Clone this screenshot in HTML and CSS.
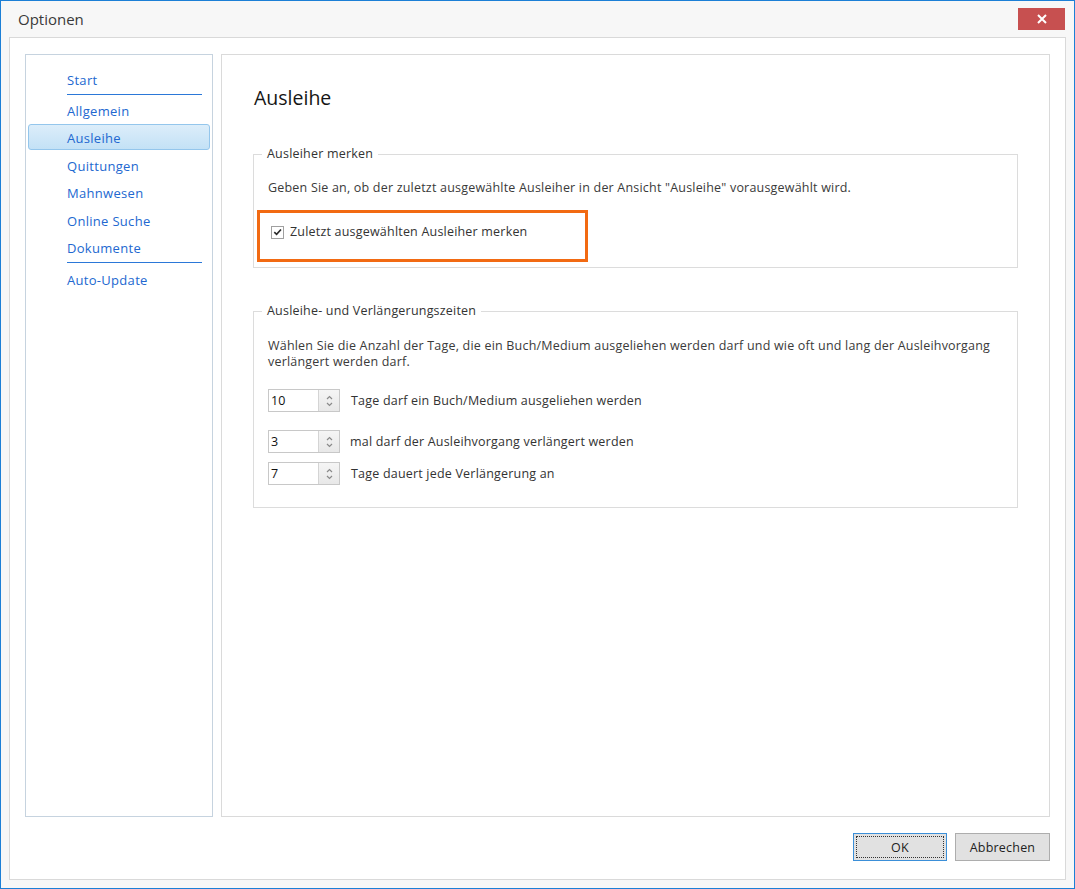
FILE: index.html
```html
<!DOCTYPE html>
<html lang="de">
<head>
    <meta charset="UTF-8">
    <title>Optionen</title>
    <link rel="stylesheet" href="styles.css">
</head>
<body>
    <div class="window">
        <div class="titlebar">
            <span class="title">Optionen</span>
            <button class="close-btn" aria-label="Schließen">
                <svg width="10" height="10" viewBox="0 0 10 10">
                    <path d="M1 1 L9 9 M9 1 L1 9" stroke="#fff" stroke-width="2" fill="none"/>
                </svg>
            </button>
        </div>

        <div class="frame">
            <div class="main">
                <nav class="nav">
                    <div class="nav-item">Start</div>
                    <div class="nav-sep"></div>
                    <div class="nav-item">Allgemein</div>
                    <div class="nav-item selected">Ausleihe</div>
                    <div class="nav-item">Quittungen</div>
                    <div class="nav-item">Mahnwesen</div>
                    <div class="nav-item">Online Suche</div>
                    <div class="nav-item">Dokumente</div>
                    <div class="nav-sep last"></div>
                    <div class="nav-item">Auto-Update</div>
                </nav>

                <div class="content">
                    <h1 class="page-title">Ausleihe</h1>

                    <fieldset class="group group-remember">
                        <legend>Ausleiher merken</legend>
                        <p class="group-text">Geben Sie an, ob der zuletzt ausgewählte Ausleiher in der Ansicht "Ausleihe" vorausgewählt wird.</p>
                        <div class="highlight">
                            <label class="check-row">
                                <span class="checkbox">
                                    <svg width="12" height="12" viewBox="0 0 12 12">
                                        <path d="M2.5 6.2 L5 8.6 L9.8 3.2" stroke="#2b2b2b" stroke-width="1.8" fill="none"/>
                                    </svg>
                                </span>
                                Zuletzt ausgewählten Ausleiher merken
                            </label>
                        </div>
                    </fieldset>

                    <fieldset class="group group-times">
                        <legend>Ausleihe- und Verlängerungszeiten</legend>
                        <p class="group-text">Wählen Sie die Anzahl der Tage, die ein Buch/Medium ausgeliehen werden darf und wie oft und lang der Ausleihvorgang<br>verlängert werden darf.</p>

                        <div class="spin-row first">
                            <div class="spinner">
                                <span class="spin-value">10</span>
                                <span class="spin-buttons">
                                    <svg width="7" height="14" viewBox="0 0 7 14">
                                        <path d="M1 5 L3.5 2.5 L6 5 M1 9 L3.5 11.5 L6 9" stroke="#8a8a8a" stroke-width="1.2" fill="none"/>
                                    </svg>
                                </span>
                            </div>
                            <span class="spin-label">Tage darf ein Buch/Medium ausgeliehen werden</span>
                        </div>

                        <div class="spin-row second">
                            <div class="spinner">
                                <span class="spin-value">3</span>
                                <span class="spin-buttons">
                                    <svg width="7" height="14" viewBox="0 0 7 14">
                                        <path d="M1 5 L3.5 2.5 L6 5 M1 9 L3.5 11.5 L6 9" stroke="#8a8a8a" stroke-width="1.2" fill="none"/>
                                    </svg>
                                </span>
                            </div>
                            <span class="spin-label">mal darf der Ausleihvorgang verlängert werden</span>
                        </div>

                        <div class="spin-row third">
                            <div class="spinner">
                                <span class="spin-value">7</span>
                                <span class="spin-buttons">
                                    <svg width="7" height="14" viewBox="0 0 7 14">
                                        <path d="M1 5 L3.5 2.5 L6 5 M1 9 L3.5 11.5 L6 9" stroke="#8a8a8a" stroke-width="1.2" fill="none"/>
                                    </svg>
                                </span>
                            </div>
                            <span class="spin-label">Tage dauert jede Verlängerung an</span>
                        </div>
                    </fieldset>
                </div>
            </div>

            <div class="footer">
                <button class="btn btn-default"><span class="focus-ring">OK</span></button>
                <button class="btn">Abbrechen</button>
            </div>
        </div>
    </div>
</body>
</html>
```

FILE: styles.css
```css
html, body {
    margin: 0;
    padding: 0;
}
body {
    font-family: "Open Sans", "Noto Sans", sans-serif;
    font-size: 12.5px;
    letter-spacing: 0.2px;
    color: #333;
    background: #fff;
}
.window {
    box-sizing: border-box;
    width: 1075px;
    height: 889px;
    border: 1px solid #1c7fd6;
    background: #f7f7f7;
}
.titlebar {
    height: 36px;
    display: flex;
    align-items: center;
    justify-content: space-between;
    padding: 0 9px 0 17px;
}
.title {
    font-size: 15px;
    letter-spacing: 0;
    color: #3a3a3a;
}
.close-btn {
    width: 47px;
    height: 22px;
    border: none;
    padding: 0;
    background: #c75050;
    display: flex;
    align-items: center;
    justify-content: center;
}
.frame {
    box-sizing: border-box;
    height: 843px;
    margin: 0 8px;
    border: 1px solid #d9d9d9;
    background: #fff;
    padding: 16px 15px 0 15px;
}
.main {
    display: flex;
    gap: 8px;
    height: 763px;
}

/* left navigation */
.nav {
    box-sizing: border-box;
    width: 188px;
    flex: none;
    border: 1px solid #c6d3df;
    padding-top: 11px;
}
.nav-item {
    box-sizing: border-box;
    height: 26px;
    line-height: 26px;
    margin: 0 2px 1.5px 2px;
    padding-left: 38px;
    font-size: 13px;
    letter-spacing: 0.3px;
    color: #2268d0;
    border: 1px solid transparent;
    border-radius: 3px;
}
.nav-item.selected {
    background: linear-gradient(#dcedfa, #c3e1f6);
    border-color: #94c6ec;
}
.nav-sep {
    height: 1px;
    background: #2b78d8;
    margin: 0 10px 2px 41px;
}
.nav-sep.last {
    margin-bottom: 3px;
}

/* right content */
.content {
    box-sizing: border-box;
    flex: 1;
    border: 1px solid #dadada;
    padding: 31px 31px 0 31px;
}
.page-title {
    margin: 0 0 0 1px;
    font-size: 19.5px;
    line-height: 24px;
    letter-spacing: 0;
    font-weight: normal;
    color: #151515;
}
.group {
    margin: 0;
    border: 1px solid #dcdcdc;
    padding: 0 0 0 14px;
    min-width: 0;
}
.group legend {
    padding: 0 5px;
    margin-left: -6px;
    line-height: 16px;
    color: #333;
}
.group-remember {
    margin-top: 36px;
    padding-bottom: 5px;
}
.group-times {
    margin-top: 35px;
    padding-bottom: 22px;
}
.group-text {
    margin: 18px 0 0 0;
    line-height: 16px;
    white-space: nowrap;
    color: #3a3a3a;
}
.group-times .group-text {
    margin-top: 19px;
}
.highlight {
    box-sizing: border-box;
    width: 331px;
    height: 52px;
    margin: 14px 0 0 -11px;
    border: 3px solid #f26a12;
    padding: 11px 0 0 11px;
}
.check-row {
    display: flex;
    align-items: center;
    gap: 6px;
    line-height: 16px;
    color: #333;
}
.checkbox {
    box-sizing: border-box;
    width: 13px;
    height: 13px;
    border: 1px solid #a0a0a0;
    background: #fff;
    display: flex;
    align-items: center;
    justify-content: center;
}

/* numeric spinners */
.spin-row {
    display: flex;
    align-items: center;
    height: 23px;
}
.spin-row.first {
    margin-top: 19px;
}
.spin-row.second {
    margin-top: 18px;
}
.spin-row.third {
    margin-top: 9px;
}
.spinner {
    box-sizing: border-box;
    width: 72px;
    height: 23px;
    display: flex;
    border: 1px solid #c8c8c8;
    background: #fff;
}
.spin-value {
    flex: 1;
    line-height: 21px;
    padding-left: 2px;
    color: #111;
}
.spin-buttons {
    width: 20px;
    border-left: 1px solid #d4d4d4;
    background: linear-gradient(#f5f5f5, #e8e8e8);
    display: flex;
    align-items: center;
    justify-content: center;
}
.spin-label {
    margin-left: 11px;
    color: #333;
}
.spin-row.second .spin-label {
    margin-left: 10px;
}

/* dialog buttons */
.footer {
    display: flex;
    justify-content: flex-end;
    gap: 8px;
    margin-top: 16px;
}
.btn {
    box-sizing: border-box;
    width: 95px;
    height: 28px;
    padding: 0;
    border: 1px solid #adadad;
    background: #e1e1e1;
    font-family: "Open Sans", "Noto Sans", sans-serif;
    font-size: 12.5px;
    letter-spacing: 0.2px;
    color: #222;
}
.btn-default {
    width: 94px;
    border-color: #3b8fd8;
    padding: 2px;
}
.focus-ring {
    box-sizing: border-box;
    display: flex;
    align-items: center;
    justify-content: center;
    height: 100%;
    border: 1px dotted #333;
}
```
